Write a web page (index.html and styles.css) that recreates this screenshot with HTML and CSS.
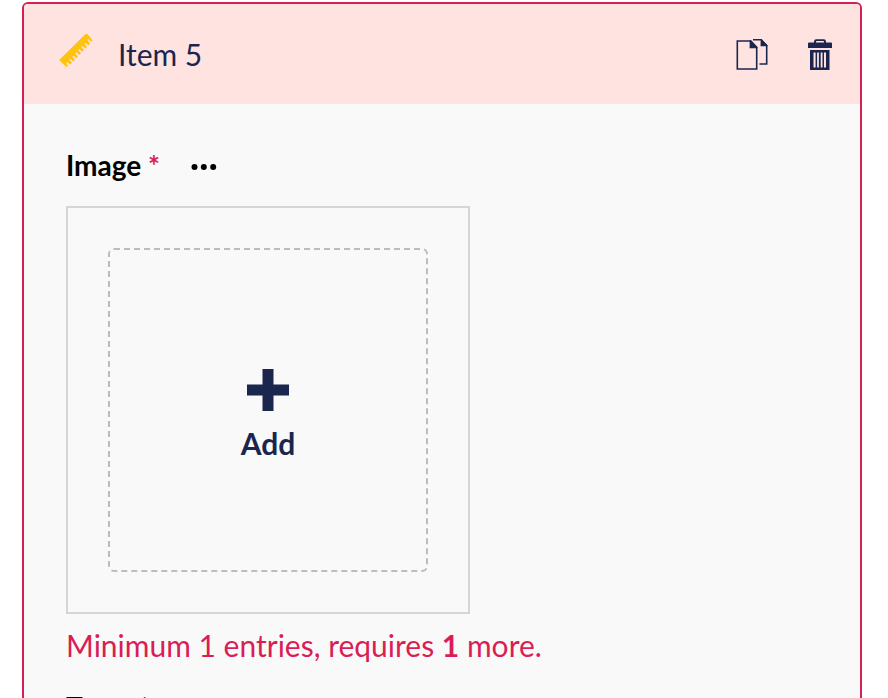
FILE: index.html
```html
<!DOCTYPE html>
<html lang="en">
<head>
<meta charset="utf-8">
<title>Item 5</title>
<link rel="stylesheet" href="styles.css">
</head>
<body>
<section class="card">
  <header class="card-header">
    <svg class="ruler" viewBox="0 0 34 34" aria-hidden="true">
      <path d="M26.2 1.2Q27.4.2 28.6 1.2L33.6 7.2 32 8.8 29.3 6.1 28.3 7.1 31 10.4 29.2 12.3 26.5 9.7 25.4 10.8 28 13.8 26.2 15.6 23.4 13 22.3 14 25 17 23.2 18.8 20.4 16.1 19.3 17.2 22 20.2 20.2 22 17.4 19.3 16.3 20.4 19 23.4 17.2 25.2 14.4 22.5 13.3 23.6 16 26.6 14.2 28.4 11.4 25.7 10.3 26.8 13 29.8 11.2 31.6 8.4 28.9 7.3 30 9 32.6 7.3 34 .8 27.8Q.2 27 1 26.2Z"/>
    </svg>
    <h1 class="card-title">Item 5</h1>
    <button class="icon-button" type="button" aria-label="Duplicate">
      <svg class="copy-icon" viewBox="0 0 32 32" aria-hidden="true">
        <path class="line" d="M1.3 2H14.5L20.7 8.5V30H1.3Z"/>
        <path d="M13.6 1.2H15.2L21.5 8V9.2H13.6Z"/>
        <path class="line" d="M17 .8H25L30.7 6.6V25H23.5"/>
        <path d="M24.6 0H25.6L31.5 6.2V7.2H24.6Z"/>
      </svg>
    </button>
    <button class="icon-button" type="button" aria-label="Delete">
      <svg class="trash-icon" viewBox="0 0 24 32" aria-hidden="true">
        <path fill-rule="evenodd" d="M0 4.6Q0 3.6 1 3.6H6V2.5Q6 .2 8.3.2H15.7Q18 .2 18 2.5V3.6H23Q24 3.6 24 4.6V9H0ZM8 3.6H16V2.7Q16 2 15.3 2H8.7Q8 2 8 2.7ZM2 11H21.5V31H2ZM5.5 13.5V28.5H7.6V13.5ZM9.1 13.5V28.5H10.9V13.5ZM12.7 13.5V28.5H14.5V13.5ZM16 13.5V28.5H18V13.5Z"/>
      </svg>
    </button>
  </header>
  <div class="card-body">
    <div class="label-row">
      <h2 class="label">Image <span class="required">*</span></h2>
      <button class="more-button" type="button" aria-label="More options">
        <svg class="more-icon" viewBox="0 0 26 8" aria-hidden="true">
          <circle cx="3.5" cy="4" r="3"/><circle cx="12.8" cy="4" r="3"/><circle cx="22.2" cy="4" r="3"/>
        </svg>
      </button>
    </div>
    <div class="picker">
      <button class="add-button" type="button">
        <svg class="plus-icon" viewBox="0 0 42 42" aria-hidden="true"><path d="M15.5 0H26.5V15.5H42V26.5H26.5V42H15.5V26.5H0V15.5H15.5Z"/></svg>
        <span>Add</span>
      </button>
    </div>
    <p class="error">Minimum 1 entries, requires <strong>1</strong> more.</p>
    <div class="label-row">
      <h2 class="label">Team <span class="required">*</span></h2>
    </div>
  </div>
</section>
</body>
</html>
```
FILE: styles.css
```css
* {
  box-sizing: border-box;
}

html {
  height: 100%;
  overflow: hidden;
}

body {
  margin: 0;
  padding: 2px 26px 0 22px;
  background: #fff;
  color: #1b264f;
  font-family: Lato, "Liberation Sans", sans-serif;
}

button {
  padding: 0;
  border: 0;
  background: none;
  color: inherit;
  font: inherit;
  cursor: pointer;
}

svg {
  display: block;
  fill: currentColor;
}

.card {
  border: 2px solid #d42054;
  border-radius: 6px;
  background: #f9f9f9;
  overflow: hidden;
}

.card-header {
  display: flex;
  align-items: center;
  height: 100px;
  padding: 0 28px 0 35px;
  background: #ffe3e0;
}

.ruler {
  width: 34px;
  height: 34px;
  margin: 0 25px 8px 0;
  color: #ffc20e;
}

.card-title {
  flex: 1;
  margin: 0;
  font-size: 30px;
  font-weight: 400;
  line-height: 36px;
}

.icon-button {
  margin: 2px 0 0 40px;
}

.copy-icon {
  width: 32px;
  height: 32px;
}

.line {
  fill: none;
  stroke: currentColor;
  stroke-width: 1.6;
}

.trash-icon {
  width: 24px;
  height: 32px;
}

.card-body {
  padding: 43px 42px;
}

.label-row {
  display: flex;
  align-items: center;
  height: 36px;
  gap: 31px;
}

.label {
  margin: 0;
  color: #000;
  font-size: 28px;
  font-weight: 700;
  line-height: 36px;
}

.required,
.error {
  color: #d91e56;
}

.more-button {
  margin-top: 4px;
  color: #000;
}

.more-icon {
  width: 26px;
  height: 8px;
}

.picker {
  width: 404px;
  max-width: 100%;
  margin-top: 23px;
  padding: 40px;
  border: 2px solid #d6d6d6;
}

.add-button {
  display: flex;
  flex-direction: column;
  align-items: center;
  justify-content: center;
  gap: 14px;
  width: 100%;
  height: 324px;
  padding-top: 10px;
  border: 2px dashed #bcbcc0;
  border-radius: 6px;
  font-size: 30px;
  font-weight: 700;
  line-height: 36px;
}

.plus-icon {
  width: 42px;
  height: 42px;
}

.error {
  margin: 13px 0 26px;
  font-size: 30px;
  line-height: 36px;
}
```
